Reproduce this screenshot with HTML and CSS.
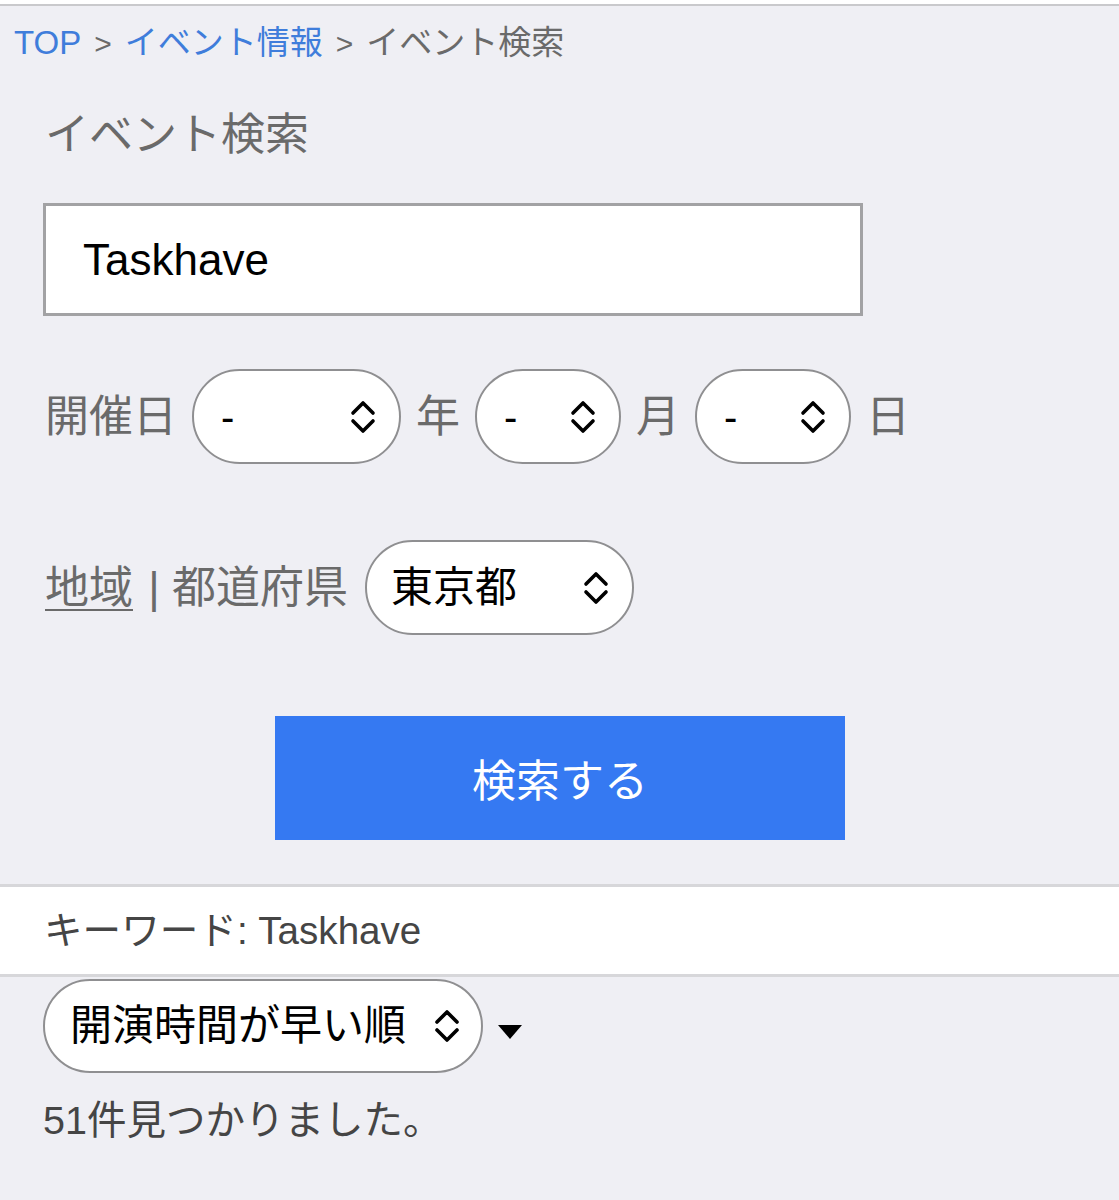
FILE: index.html
```html
<!DOCTYPE html>
<html lang="ja">
<head>
<meta charset="utf-8">
<title>イベント検索</title>
<link rel="stylesheet" href="styles.css">
</head>
<body>
<div class="topbar"></div>
<nav class="breadcrumb">
  <a class="crumb-link" href="#">TOP</a><span class="sep">&gt;</span><a class="crumb-link" href="#">イベント情報</a><span class="sep">&gt;</span><span class="crumb-current">イベント検索</span>
</nav>
<main class="search">
  <h1 class="search-title">イベント検索</h1>
  <input class="keyword-input" type="text" value="Taskhave">
  <div class="row date-row">
    <span class="label">開催日</span>
    <div class="select select-year"><span class="select-value">-</span><svg class="chev" viewBox="0 0 26 36"><path d="M3 14 L13 4 L23 14 M3 22 L13 32 L23 22"/></svg></div>
    <span class="label">年</span>
    <div class="select select-month"><span class="select-value">-</span><svg class="chev" viewBox="0 0 26 36"><path d="M3 14 L13 4 L23 14 M3 22 L13 32 L23 22"/></svg></div>
    <span class="label">月</span>
    <div class="select select-day"><span class="select-value">-</span><svg class="chev" viewBox="0 0 26 36"><path d="M3 14 L13 4 L23 14 M3 22 L13 32 L23 22"/></svg></div>
    <span class="label">日</span>
  </div>
  <div class="row region-row">
    <span class="label"><a class="region-link" href="#">地域</a> | 都道府県</span>
    <div class="select select-pref"><span class="select-value pref">東京都</span><svg class="chev" viewBox="0 0 26 36"><path d="M3 14 L13 4 L23 14 M3 22 L13 32 L23 22"/></svg></div>
  </div>
  <div class="button-row">
    <button class="search-button" type="button">検索する</button>
  </div>
</main>
<div class="keyword-band">キーワード: Taskhave</div>
<div class="sort-row">
  <div class="select select-sort"><span class="select-value sort">開演時間が早い順</span><svg class="chev" viewBox="0 0 26 36"><path d="M3 14 L13 4 L23 14 M3 22 L13 32 L23 22"/></svg></div>
  <svg class="tri" viewBox="0 0 26 16"><path d="M1 1 H25 L13 15 Z"/></svg>
</div>
<p class="result-count">51件見つかりました。</p>
</body>
</html>
```

FILE: styles.css
```css
html, body {
  margin: 0;
  padding: 0;
  background: #efeff4;
}
body {
  font-family: "Liberation Sans", "Noto Sans CJK JP", sans-serif;
  color: #666;
}
.topbar {
  height: 4px;
  background: #fff;
  border-bottom: 2px solid #c9c9cc;
}
.breadcrumb {
  height: 74px;
  line-height: 74px;
  padding-left: 14px;
  font-size: 33px;
  color: #6a6a6a;
  white-space: nowrap;
}
.crumb-link {
  color: #3f7ddb;
  text-decoration: none;
}
.sep {
  margin: 0 13px;
  font-size: 30px;
}
.search {
  padding-left: 43px;
}
.search-title {
  margin: 0;
  padding-left: 2px;
  height: 110px;
  line-height: 110px;
  font-size: 44px;
  font-weight: 400;
  color: #6a6a6a;
}
.keyword-input {
  display: block;
  box-sizing: border-box;
  margin: 13px 0 0;
  width: 820px;
  height: 113px;
  padding: 0 0 0 37px;
  border: 3px solid #a2a2a4;
  border-radius: 0;
  background: #fff;
  font-family: "Liberation Sans", "Noto Sans CJK JP", sans-serif;
  font-size: 44px;
  color: #000;
  outline: none;
}
.row {
  display: flex;
  align-items: center;
  height: 95px;
  gap: 15px;
  padding-left: 2px;
}
.date-row {
  margin-top: 53px;
}
.region-row {
  margin-top: 76px;
  gap: 17px;
}
.label {
  font-size: 44px;
  line-height: 1;
  color: #6a6a6a;
  white-space: nowrap;
}
.region-link {
  color: #6a6a6a;
  text-decoration: underline;
  text-decoration-thickness: 2px;
  text-underline-offset: 6px;
  margin-right: 3px;
}
.select {
  box-sizing: border-box;
  display: flex;
  align-items: center;
  justify-content: space-between;
  height: 95px;
  padding: 0 23px 0 27px;
  border: 2px solid #8f8f91;
  border-radius: 48px;
  background: #fff;
}
.select-year { width: 209px; }
.select-month { width: 146px; }
.select-day { width: 156px; }
.select-pref { width: 269px; padding-left: 24px; }
.select-value {
  font-size: 40px;
  line-height: 1;
  color: #000;
}
.select-value.pref {
  font-size: 42px;
}
.chev {
  width: 26px;
  height: 36px;
  flex: none;
}
.chev path {
  fill: none;
  stroke: #000;
  stroke-width: 3.6;
  stroke-linecap: round;
  stroke-linejoin: round;
}
.button-row {
  margin-top: 81px;
  padding-left: 232px;
}
.search-button {
  display: block;
  width: 570px;
  height: 124px;
  border: none;
  border-radius: 0;
  background: #3579f2;
  color: #fff;
  font-family: "Liberation Sans", "Noto Sans CJK JP", sans-serif;
  font-size: 44px;
  padding: 0;
}
.keyword-band {
  margin-top: 44px;
  height: 87px;
  line-height: 87px;
  border-top: 3px solid #d7d7da;
  border-bottom: 3px solid #d7d7da;
  background: #fff;
  padding-left: 44px;
  font-size: 38.6px;
  color: #454545;
}
.sort-row {
  display: flex;
  align-items: center;
  gap: 14px;
  margin-top: 2px;
  padding-left: 43px;
}
.select-sort {
  width: 440px;
  height: 94px;
  padding: 0 21px 0 25px;
}
.select-value.sort {
  font-size: 42px;
}
.tri {
  width: 26px;
  height: 16px;
  margin-top: 12px;
}
.tri path {
  fill: #000;
}
.result-count {
  margin: 0;
  height: 94px;
  line-height: 94px;
  padding-left: 43px;
  font-size: 39.5px;
  color: #454545;
}
```
